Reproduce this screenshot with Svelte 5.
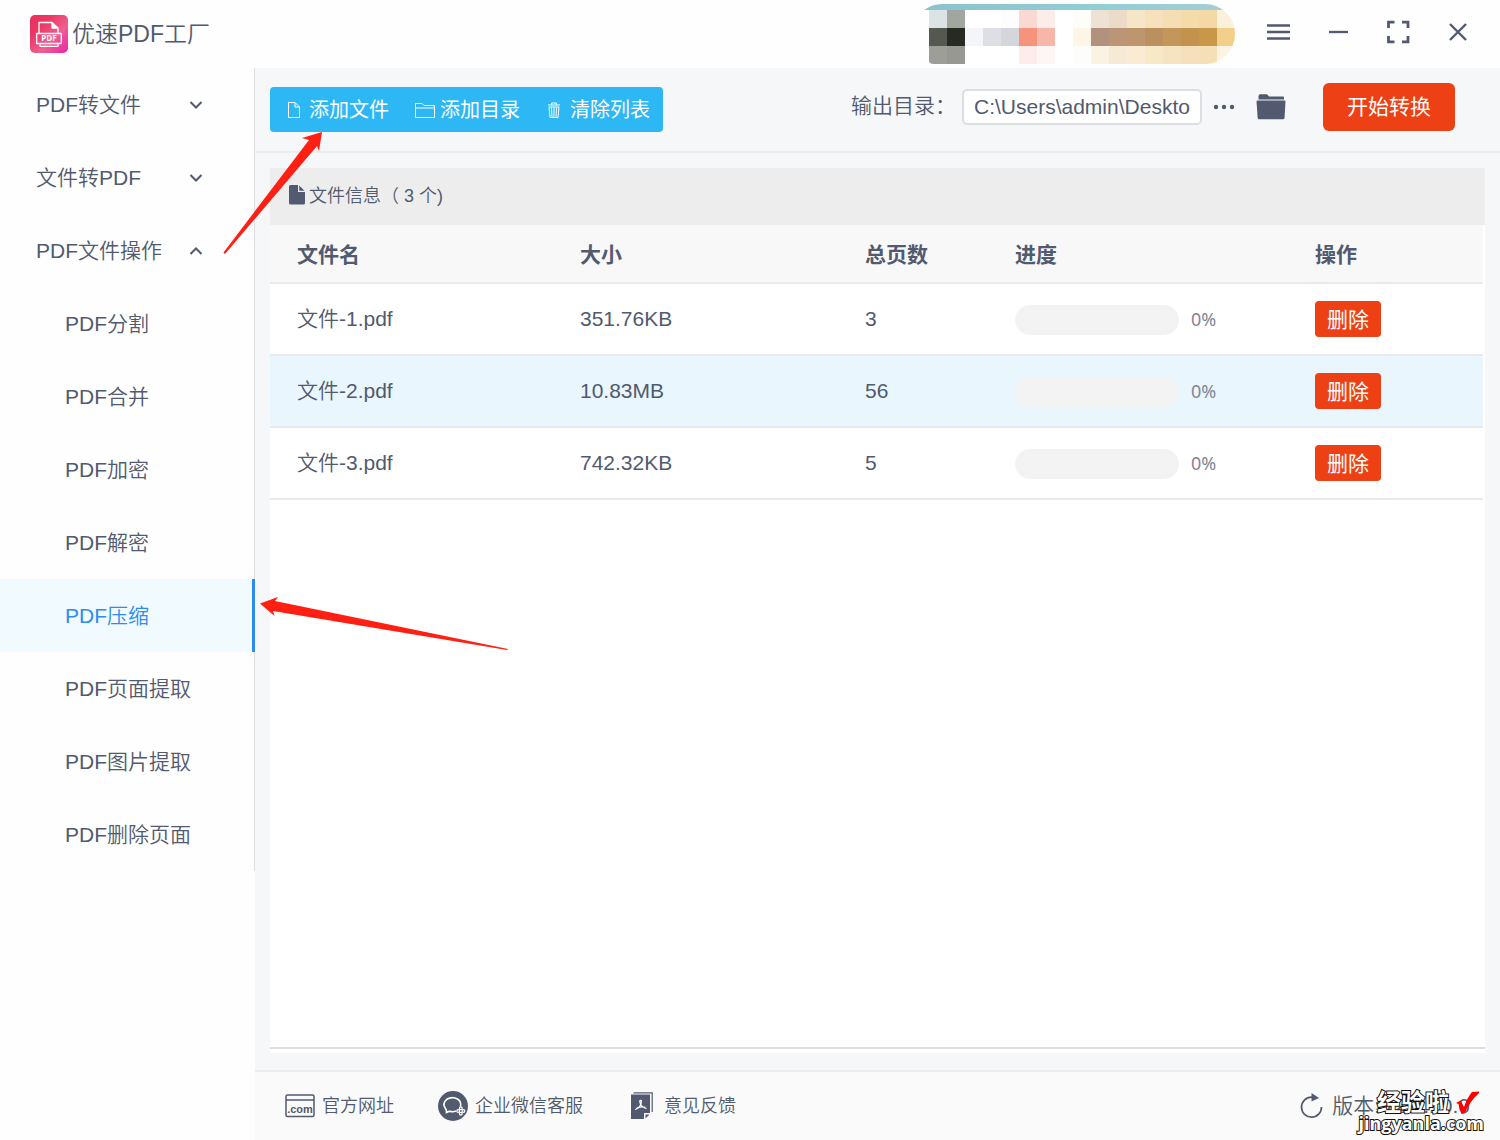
<script>
  const groups = [
    { label: 'PDF转文件', open: false },
    { label: '文件转PDF', open: false },
    { label: 'PDF文件操作', open: true }
  ];
  const tools = ['PDF分割', 'PDF合并', 'PDF加密', 'PDF解密', 'PDF压缩', 'PDF页面提取', 'PDF图片提取', 'PDF删除页面'];
  let active = $state('PDF压缩');
  let outputDir = $state('C:\\Users\\admin\\Deskto');

  let files = $state([
    { name: '文件-1.pdf', size: '351.76KB', pages: 3, progress: 0 },
    { name: '文件-2.pdf', size: '10.83MB', pages: 56, progress: 0 },
    { name: '文件-3.pdf', size: '742.32KB', pages: 5, progress: 0 }
  ]);
  const highlighted = '文件-2.pdf';

  const mosaic = [
    ['#dce3e4', '#a1a69e', '#fff', '#fff', '#fdfdfd', '#f9d9d2', '#fcecea', '#fff', '#fdfdf9', '#eee2d4', '#ecdbc8', '#f6e6c8', '#f7e1bd', '#f5deb4', '#f4dbaa', '#f4d9a6', '#fbf0dc'],
    ['#54584f', '#272a20', '#f3f5f8', '#dddfe4', '#d4d6db', '#f6937b', '#f7b7a8', '#fff', '#fdf6e7', '#b3917f', '#bb9576', '#bd966d', '#ba915e', '#c29759', '#c3924d', '#c8974a', '#f3d08a'],
    ['#9e9e98', '#979892', '#fff', '#fff', '#fff', '#fcecea', '#fdf6f4', '#fff', '#fdfdfb', '#fbf3e2', '#f6ead6', '#fbebd2', '#f7e8c6', '#f6e3c0', '#f6e0bb', '#f5dfb4', '#fcf3e2']
  ];
</script>

<div class="app">
  <header>
    <svg class="logo" width="38" height="38" viewBox="0 0 38 38" aria-hidden="true">
      <defs>
        <linearGradient id="logo-bg" x1="0" y1="0" x2="1" y2="1">
          <stop offset="0" stop-color="#ea2f55" />
          <stop offset="0.3" stop-color="#eb3866" />
          <stop offset="0.62" stop-color="#ee6090" />
          <stop offset="1" stop-color="#ec22a8" />
        </linearGradient>
      </defs>
      <rect width="38" height="38" rx="5" fill="url(#logo-bg)" />
      <g fill="none" stroke="#fff" stroke-width="1.3" stroke-linejoin="round">
        <path d="M9 18V7.500H22L28 13V18M22 7.500V13H28M6.700 18.500H31.300V28.500H6.700ZM10 28.500V31.300H28V28.500" />
      </g>
      <path d="M22 7.500L28 13H22Z" fill="#fff" />
      <text x="19" y="26" text-anchor="middle" fill="#fff" class="logo-text">PDF</text>
    </svg>
    <h1>优速PDF工厂</h1>

    <svg class="banner" width="312" height="60" viewBox="0 0 312 60" aria-hidden="true">
      <defs>
        <clipPath id="banner-shape">
          <path d="M0 6Q8 0 18 0H281A30 30 0 0 1 281 60H10Q5 60 5 57V6Z" />
        </clipPath>
        <linearGradient id="banner-top">
          <stop offset="0" stop-color="#8bc2cf" />
          <stop offset="0.6" stop-color="#92cdd6" />
          <stop offset="1" stop-color="#a3cfd5" />
        </linearGradient>
      </defs>
      <g clip-path="url(#banner-shape)" shape-rendering="crispEdges">
        <rect width="300" height="6" fill="url(#banner-top)" />
        {#each mosaic as row, r}
          {#each row as color, c}
            <rect x={5 + c * 18} y={6 + r * 18} width="18" height="18" fill={color} />
          {/each}
        {/each}
      </g>
    </svg>

    <div class="window-controls">
      <button aria-label="菜单">
        <svg width="24" height="24" viewBox="0 0 24 24"><path d="M1 5.500H24M1 12H24M1 18.500H24" stroke-width="2.300" /></svg>
      </button>
      <button aria-label="最小化">
        <svg width="24" height="24" viewBox="0 0 24 24"><path d="M3 12H22" stroke-width="2.300" /></svg>
      </button>
      <button aria-label="最大化">
        <svg width="24" height="24" viewBox="0 0 24 24"><path d="M2.500 8V2.200H8.500M16 2.200H22V8M22 16V21.800H16M8.500 21.800H2.500V16" stroke-width="2.800" /></svg>
      </button>
      <button aria-label="关闭">
        <svg width="24" height="24" viewBox="0 0 24 24"><path d="M4 4L20 20M20 4L4 20" stroke-width="2.400" /></svg>
      </button>
    </div>
  </header>

  <div class="body">
    <aside>
      <nav>
        {#each groups as group}
          <button class="group">
            {group.label}
            <svg width="14" height="10" viewBox="0 0 14 10">
              <path d={group.open ? 'M1.500 8L7 2.500L12.500 8' : 'M1.500 2L7 7.500L12.500 2'} stroke-width="2" />
            </svg>
          </button>
        {/each}
        {#each tools as tool}
          <button class="tool" class:active={tool === active} onclick={() => (active = tool)}>{tool}</button>
        {/each}
      </nav>
    </aside>

    <main>
      <div class="toolbar">
        <div class="actions">
          <button>
            <svg width="14" height="18" viewBox="0 0 14 18"><path d="M1.500 1.500H8L12.500 6V16.500H1.500ZM8 1.500V6H12.500" stroke-width="1" /></svg>
            添加文件
          </button>
          <button>
            <svg width="20" height="18" viewBox="0 0 20 18"><path d="M.5 16.500V2.500H7L9 4.500H19.500V16.500ZM.5 7H19.500" stroke-width="1" /></svg>
            添加目录
          </button>
          <button>
            <svg width="16" height="18" viewBox="0 0 16 18"><path d="M2 4H14M5.500 4V2H10.500V4M3 6H13L12 16.500H4ZM5.500 6.500L6 16M8 6.500V16M10.500 6.500L10 16" stroke-width="1" /></svg>
            清除列表
          </button>
        </div>
        <div class="output">
          <label for="output-dir">输出目录：</label>
          <input id="output-dir" type="text" bind:value={outputDir} />
          <button class="icon more" aria-label="选择目录">
            <svg width="22" height="6" viewBox="0 0 22 6"><circle cx="3" cy="3" r="2.200" /><circle cx="11" cy="3" r="2.200" /><circle cx="19" cy="3" r="2.200" /></svg>
          </button>
          <button class="icon folder" aria-label="打开目录">
            <svg width="30" height="26" viewBox="0 0 30 26"><path d="M3 1Q3 .3 4 .3H11L13 2.500H27Q28 2.500 28 3.500V5.500H2.500V2ZM.5 7.500Q.5 6.500 1.500 6.500H28.500Q29.500 6.500 29.500 7.500L28.500 24Q28.400 25.200 27.200 25.200H3Q1.800 25.200 1.700 24Z" /></svg>
          </button>
          <button class="start">开始转换</button>
        </div>
      </div>

      <section class="panel">
        <div class="panel-title">
          <svg width="16" height="20" viewBox="0 0 16 20"><path d="M1.500 0H9V7H16V18Q16 19.500 14.500 19.500H1.500Q0 19.500 0 18V1.500Q0 0 1.500 0ZM10.200 .5L15.500 5.800H10.200Z" /></svg>
          <span>文件信息（ {files.length} 个)</span>
        </div>
        <div class="table-area">
          <table>
            <thead>
              <tr>
                <th class="name">文件名</th>
                <th>大小</th>
                <th class="pages">总页数</th>
                <th class="progress">进度</th>
                <th class="operation">操作</th>
              </tr>
            </thead>
            <tbody>
              {#each files as file, i (file.name)}
                <tr class:highlighted={file.name === highlighted}>
                  <td>{file.name}</td>
                  <td>{file.size}</td>
                  <td>{file.pages}</td>
                  <td>
                    <div class="meter">
                      <div class="track"><div class="fill" style="width: {file.progress}%"></div></div>
                      <span>{file.progress}%</span>
                    </div>
                  </td>
                  <td><button class="delete" onclick={() => files.splice(i, 1)}>删除</button></td>
                </tr>
              {/each}
            </tbody>
          </table>
        </div>
      </section>

      <footer>
        <a href="#site">
          <svg width="30" height="24" viewBox="0 0 30 24">
            <rect x="1" y="1" width="28" height="21.500" rx="1.500" fill="none" stroke="#515a6e" stroke-width="1.500" />
            <path d="M1 6H29" stroke="#515a6e" stroke-width="1.500" />
            <text x="15" y="19" text-anchor="middle" class="com">.com</text>
          </svg>
          官方网址
        </a>
        <a href="#service">
          <svg width="30" height="30" viewBox="0 0 30 30">
            <circle cx="15" cy="15" r="15" />
            <path d="M22.500 15.500Q23.500 10.500 19.500 8Q14 5 8.800 8.300Q4 12.500 7.200 17Q8.800 19 8.500 21.500L11.500 20.200Q15 21.300 18 20" fill="none" stroke="#fff" stroke-width="1.600" />
            <g fill="none" stroke="#fff" stroke-width="1.200">
              <circle cx="22.800" cy="17.300" r="1.400" />
              <circle cx="25.400" cy="20" r="1.400" />
              <circle cx="22.800" cy="22.700" r="1.400" />
              <circle cx="20.200" cy="20" r="1.400" />
            </g>
          </svg>
          企业微信客服
        </a>
        <a href="#feedback">
          <svg width="22" height="28" viewBox="0 0 22 28">
            <path d="M2.500 .8H21.200V20" fill="none" stroke="#515a6e" stroke-width="1.200" />
            <path d="M0 2.500H19V21H13V27H0ZM14.500 22.500H18.500L14.500 26.500Z" />
            <path d="M9.500 8Q8 8.500 9.500 12Q10.500 15 15.500 16.500M9.800 8Q11 9 9.700 12.500Q8 16.500 4 17.500M5 16.500Q9 14 14 15.200" fill="none" stroke="#fff" stroke-width="1.200" />
          </svg>
          意见反馈
        </a>
        <div class="version">
          <svg width="24" height="26" viewBox="0 0 24 26">
            <path d="M13 4.200H11.500A10 10 0 1 0 21.500 14" fill="none" stroke="#515a6e" stroke-width="1.700" />
            <path d="M11.500 0L19 5L11.500 8.500Z" />
          </svg>
          版本:V2.0.10.0
        </div>
      </footer>
    </main>
  </div>

  <svg class="annotations" width="512" height="660" viewBox="0 0 512 660" aria-hidden="true">
    <path d="M322 132L302 138L309 140L223.500 252.500L225 254L317 146L319 151Z" />
    <path d="M260 603.500L278 597L275 601L508 649L507 650L273 611L274.500 616Z" />
  </svg>

  <div class="watermark">
    <div class="brand">
      经验啦
      <svg width="24" height="24" viewBox="0 0 24 24"><path d="M1 12L5.500 9.500L9 16Q12 7 17 1L24 .5V2Q15 10 9.500 22.500L6.500 23Q4.500 17 3.500 13Z" /></svg>
    </div>
    <div class="domain">jingyanla.com</div>
  </div>
</div>

<style>
  :global(body) {
    margin: 0;
  }
  .app {
    position: relative;
    display: flex;
    flex-direction: column;
    min-height: 100vh;
    background: #fefefe;
    color: #515a6e;
    font-family: 'Liberation Sans', 'Noto Sans CJK SC', sans-serif;
    font-size: 21px;
    font-weight: 350;
    line-height: 30px;
  }
  button,
  input {
    font: inherit;
    color: inherit;
    box-sizing: border-box;
  }
  button {
    padding: 0;
    border: 0;
    background: none;
    cursor: pointer;
  }
  svg {
    flex: none;
    fill: #515a6e;
  }
  header {
    display: flex;
    align-items: center;
    height: 68px;
    padding: 0 30px;
  }
  .logo-text {
    font: bold 8px 'Open Sans', sans-serif;
  }
  h1 {
    margin: 0 auto 0 4px;
    font-size: 23px;
    font-weight: 350;
    line-height: 36px;
  }
  .banner {
    margin-right: 30px;
  }
  .window-controls {
    display: flex;
    gap: 36px;
    padding-bottom: 4px;
  }
  .window-controls button {
    display: flex;
  }
  .window-controls svg,
  nav svg {
    fill: none;
    stroke: #515a6e;
  }
  .body {
    display: flex;
    flex: 1;
  }
  aside {
    flex: none;
    width: 255px;
  }
  nav {
    border-right: 1px solid #dcdee2;
  }
  nav button {
    display: flex;
    align-items: center;
    width: 100%;
    height: 73px;
    text-align: left;
  }
  .group {
    justify-content: space-between;
    padding: 0 51px 0 36px;
  }
  .tool {
    padding-left: 65px;
  }
  .tool.active {
    width: 255px;
    border-right: 3px solid #2d8cf0;
    background: #f0faff;
    color: #2d8cf0;
  }
  main {
    display: flex;
    flex: 1;
    flex-direction: column;
    min-width: 0;
    background: #f5f7f9;
  }
  .toolbar {
    display: flex;
    align-items: center;
    justify-content: space-between;
    height: 83px;
    padding: 0 45px 0 15px;
    border-bottom: 2px solid #ebedef;
  }
  .actions {
    display: flex;
    align-items: center;
    gap: 26px;
    height: 45px;
    padding: 0 13px 0 17px;
    border-radius: 4px;
    background: #2db7f5;
    color: #fff;
    font-size: 20px;
    font-weight: 400;
  }
  .actions button {
    display: flex;
    align-items: center;
    gap: 8px;
  }
  .actions button:nth-child(2) {
    gap: 5px;
  }
  .actions svg {
    fill: none;
    stroke: #fff;
  }
  .output {
    display: flex;
    align-items: center;
    padding-bottom: 6px;
  }
  label {
    padding-bottom: 2px;
  }
  input {
    width: 240px;
    height: 36px;
    margin-left: 6px;
    padding: 0 10px;
    border: 2px solid #dcdee2;
    border-radius: 5px;
    background: #fff;
  }
  .icon {
    display: flex;
  }
  .more {
    margin-left: 11px;
  }
  .folder {
    margin: 0 37px 0 21px;
  }
  .start {
    width: 132px;
    height: 48px;
    border-radius: 6px;
    background: #ed4014;
    color: #fff;
    font-weight: 400;
  }
  .panel {
    display: flex;
    flex: 1;
    flex-direction: column;
    margin: 15px 15px 17px;
    padding-bottom: 4px;
    background: #fff;
  }
  .panel-title {
    display: flex;
    align-items: center;
    gap: 4px;
    height: 53px;
    padding: 0 19px 4px;
    background: #ededed;
    font-size: 18px;
  }
  .panel-title span {
    padding-top: 2px;
  }
  .table-area {
    flex: 1;
    padding-right: 2px;
    border-bottom: 2px solid #dcdee2;
  }
  table {
    width: 100%;
    border-collapse: separate;
    border-spacing: 0;
    table-layout: fixed;
  }
  th,
  td {
    box-sizing: border-box;
    height: 72px;
    padding: 0 0 0 27px;
    border-bottom: 2px solid #e8eaec;
    text-align: left;
  }
  th {
    height: 59px;
    padding-top: 2px;
    background: #f8f8f9;
    font-weight: bold;
  }
  .name {
    width: 283px;
  }
  .pages {
    width: 150px;
  }
  .progress {
    width: 300px;
  }
  .operation {
    width: 195px;
  }
  .highlighted td {
    background: #e9f6fe;
  }
  .meter {
    display: flex;
    align-items: center;
    gap: 12px;
    padding-top: 2px;
    font-family: 'Noto Sans', sans-serif;
    font-size: 18px;
    font-weight: 400;
    color: #808695;
  }
  .meter span {
    padding-bottom: 2px;
    line-height: 28px;
  }
  .track {
    width: 164px;
    height: 30px;
    overflow: hidden;
    border-radius: 15px;
    background: #f3f3f3;
  }
  .fill {
    height: 100%;
    background: #2db7f5;
  }
  .delete {
    display: block;
    width: 66px;
    height: 36px;
    padding-top: 2px;
    border-radius: 4px;
    background: #ed4014;
    color: #fff;
    font-weight: 400;
  }
  footer {
    display: flex;
    align-items: center;
    height: 68px;
    padding: 0 30px;
    border-top: 2px solid #ebedef;
    background: #fafafa;
    font-size: 18px;
  }
  footer a {
    display: flex;
    align-items: center;
    gap: 7px;
    margin-right: 44px;
    color: inherit;
    text-decoration: none;
  }
  footer a:nth-child(3) {
    gap: 11px;
    margin-left: 4px;
  }
  .com {
    font: bold 11px 'Liberation Sans', sans-serif;
  }
  .version {
    display: flex;
    align-items: center;
    gap: 8px;
    margin-left: auto;
    font-size: 21px;
  }
  .annotations {
    position: absolute;
    top: 0;
    left: 0;
    fill: #ff2013;
    pointer-events: none;
  }
  .watermark {
    position: absolute;
    right: 16px;
    bottom: 9px;
    color: #fff;
    font-weight: bold;
    line-height: 24px;
    text-align: right;
    -webkit-text-stroke: 2px #111;
    paint-order: stroke fill;
    pointer-events: none;
  }
  .brand {
    display: flex;
    align-items: center;
    justify-content: flex-end;
    gap: 6px;
    padding-right: 5px;
    font-size: 24px;
  }
  .brand svg {
    fill: #f00;
  }
  .domain {
    font-family: 'Open Sans', sans-serif;
    font-size: 18px;
    line-height: 16px;
  }
</style>
